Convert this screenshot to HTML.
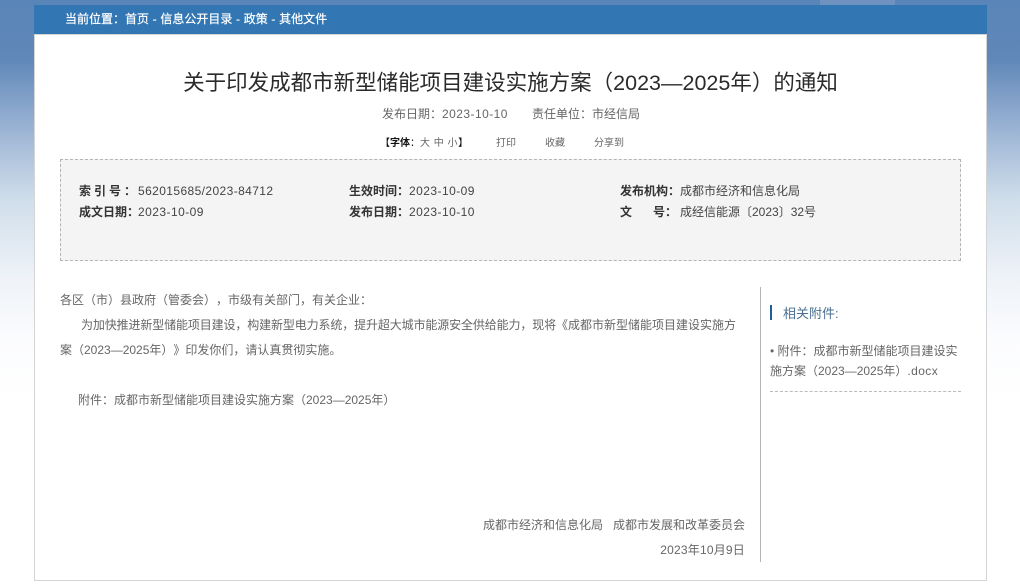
<!DOCTYPE html>
<html lang="zh-CN">
<head>
<meta charset="utf-8">
<title>关于印发成都市新型储能项目建设实施方案（2023—2025年）的通知</title>
<style>
html,body{margin:0;padding:0;}
body{width:1020px;height:586px;overflow:hidden;position:relative;font-family:"Liberation Sans","Noto Sans CJK SC",sans-serif;text-spacing-trim:space-all;
background:linear-gradient(180deg,#5a85b8 0px,#6088b8 60px,#9cb4d4 130px,#d0deeb 200px,#eff3f8 280px,#fbfcfe 340px,#ffffff 400px);}
.a{position:absolute;white-space:nowrap;line-height:20px;}
#panel{position:absolute;left:34px;top:34px;width:951px;height:545px;background:#fff;border:1px solid #d4d4d4;}
#head{position:absolute;left:34px;top:5px;width:953px;height:29px;background:#3276b4;}
.t12{font-size:12px;color:#666;}
.t10{font-size:10px;color:#666;}
.b{font-weight:bold;color:#333;font-size:12px;}
.v{font-size:12px;color:#444;}
.d{letter-spacing:.45px;}
</style>
</head>
<body>
<div style="position:absolute;left:820px;top:0;width:75px;height:5px;background:#6f92c0;"></div>
<div id="panel"></div>
<div id="head"></div>
<div class="a" style="left:65px;top:9px;font-size:12px;color:#fff;word-spacing:.35px;-webkit-text-stroke:.2px #fff;">当前位置：首页 - 信息公开目录 - 政策 - 其他文件</div>

<div class="a" style="left:34px;width:953px;top:68px;line-height:30px;text-align:center;font-size:21.5px;color:#2a2a2a;">关于印发成都市新型储能项目建设实施方案（2023—2025年）的通知</div>

<div class="a t12" style="left:382px;top:104px;">发布日期：<span class="d">2023-10-10</span></div>
<div class="a t12" style="left:532px;top:104px;">责任单位：市经信局</div>

<div class="a" style="left:380px;top:134px;font-size:10px;color:#111;">【<b>字体</b>：<span style="color:#666;letter-spacing:.5px;">大 中 小</span>】</div>
<div class="a t10" style="left:496px;top:134px;">打印</div>
<div class="a t10" style="left:545px;top:134px;">收藏</div>
<div class="a t10" style="left:594px;top:134px;">分享到</div>

<div style="position:absolute;left:60px;top:159px;width:899px;height:100px;background:#f4f4f4;border:1px dashed #b4b4b4;"></div>

<div class="a b" style="left:79px;top:181px;letter-spacing:3px;">索引号：</div>
<div class="a v" style="left:138px;top:181px;letter-spacing:.4px;">562015685/2023-84712</div>
<div class="a b" style="left:79px;top:202px;">成文日期：</div>
<div class="a v d" style="left:138px;top:202px;">2023-10-09</div>

<div class="a b" style="left:349px;top:181px;">生效时间：</div>
<div class="a v d" style="left:409px;top:181px;">2023-10-09</div>
<div class="a b" style="left:349px;top:202px;">发布日期：</div>
<div class="a v d" style="left:409px;top:202px;">2023-10-10</div>

<div class="a b" style="left:620px;top:181px;">发布机构：</div>
<div class="a v" style="left:680px;top:181px;">成都市经济和信息化局</div>
<div class="a b" style="left:620px;top:202px;">文</div>
<div class="a b" style="left:653px;top:202px;">号：</div>
<div class="a v" style="left:680px;top:202px;">成经信能源〔2023〕32号</div>

<div class="a t12" style="left:60px;top:290px;">各区（市）县政府（管委会），市级有关部门，有关企业：</div>
<div class="a t12" style="left:81px;top:315px;"><span style="letter-spacing:-.125px;">为加快推进新型储能项目建设，构建新型电力系统，提升超大城市能源安全供给能力，现将</span>《成都市新型储能项目建设实施方</div>
<div class="a t12" style="left:60px;top:340px;">案（2023—2025年）》印发你们，请认真贯彻实施。</div>
<div class="a t12" style="left:78px;top:390px;">附件：成都市新型储能项目建设实施方案（2023—2025年）</div>
<div class="a t12" style="right:275px;top:515px;">成都市经济和信息化局&nbsp;&nbsp;&nbsp;成都市发展和改革委员会</div>
<div class="a t12" style="right:275px;top:540px;letter-spacing:.2px;">2023年10月9日</div>

<div style="position:absolute;left:760px;top:287px;width:1px;height:275px;background:#b5b5b5;"></div>
<div style="position:absolute;left:770px;top:305px;width:2px;height:15px;background:#1f5f9f;"></div>
<div class="a" style="left:783px;top:304px;font-size:13px;color:#4a6f92;">相关附件:</div>
<div class="a t12" style="left:770px;top:341px;">• 附件：成都市新型储能项目建设实</div>
<div class="a t12" style="left:770px;top:361px;">施方案（2023—2025年）<span style="letter-spacing:.4px;">.docx</span></div>
<div style="position:absolute;left:770px;top:391px;width:191px;border-top:1px dashed #bbb;"></div>
</body>
</html>
